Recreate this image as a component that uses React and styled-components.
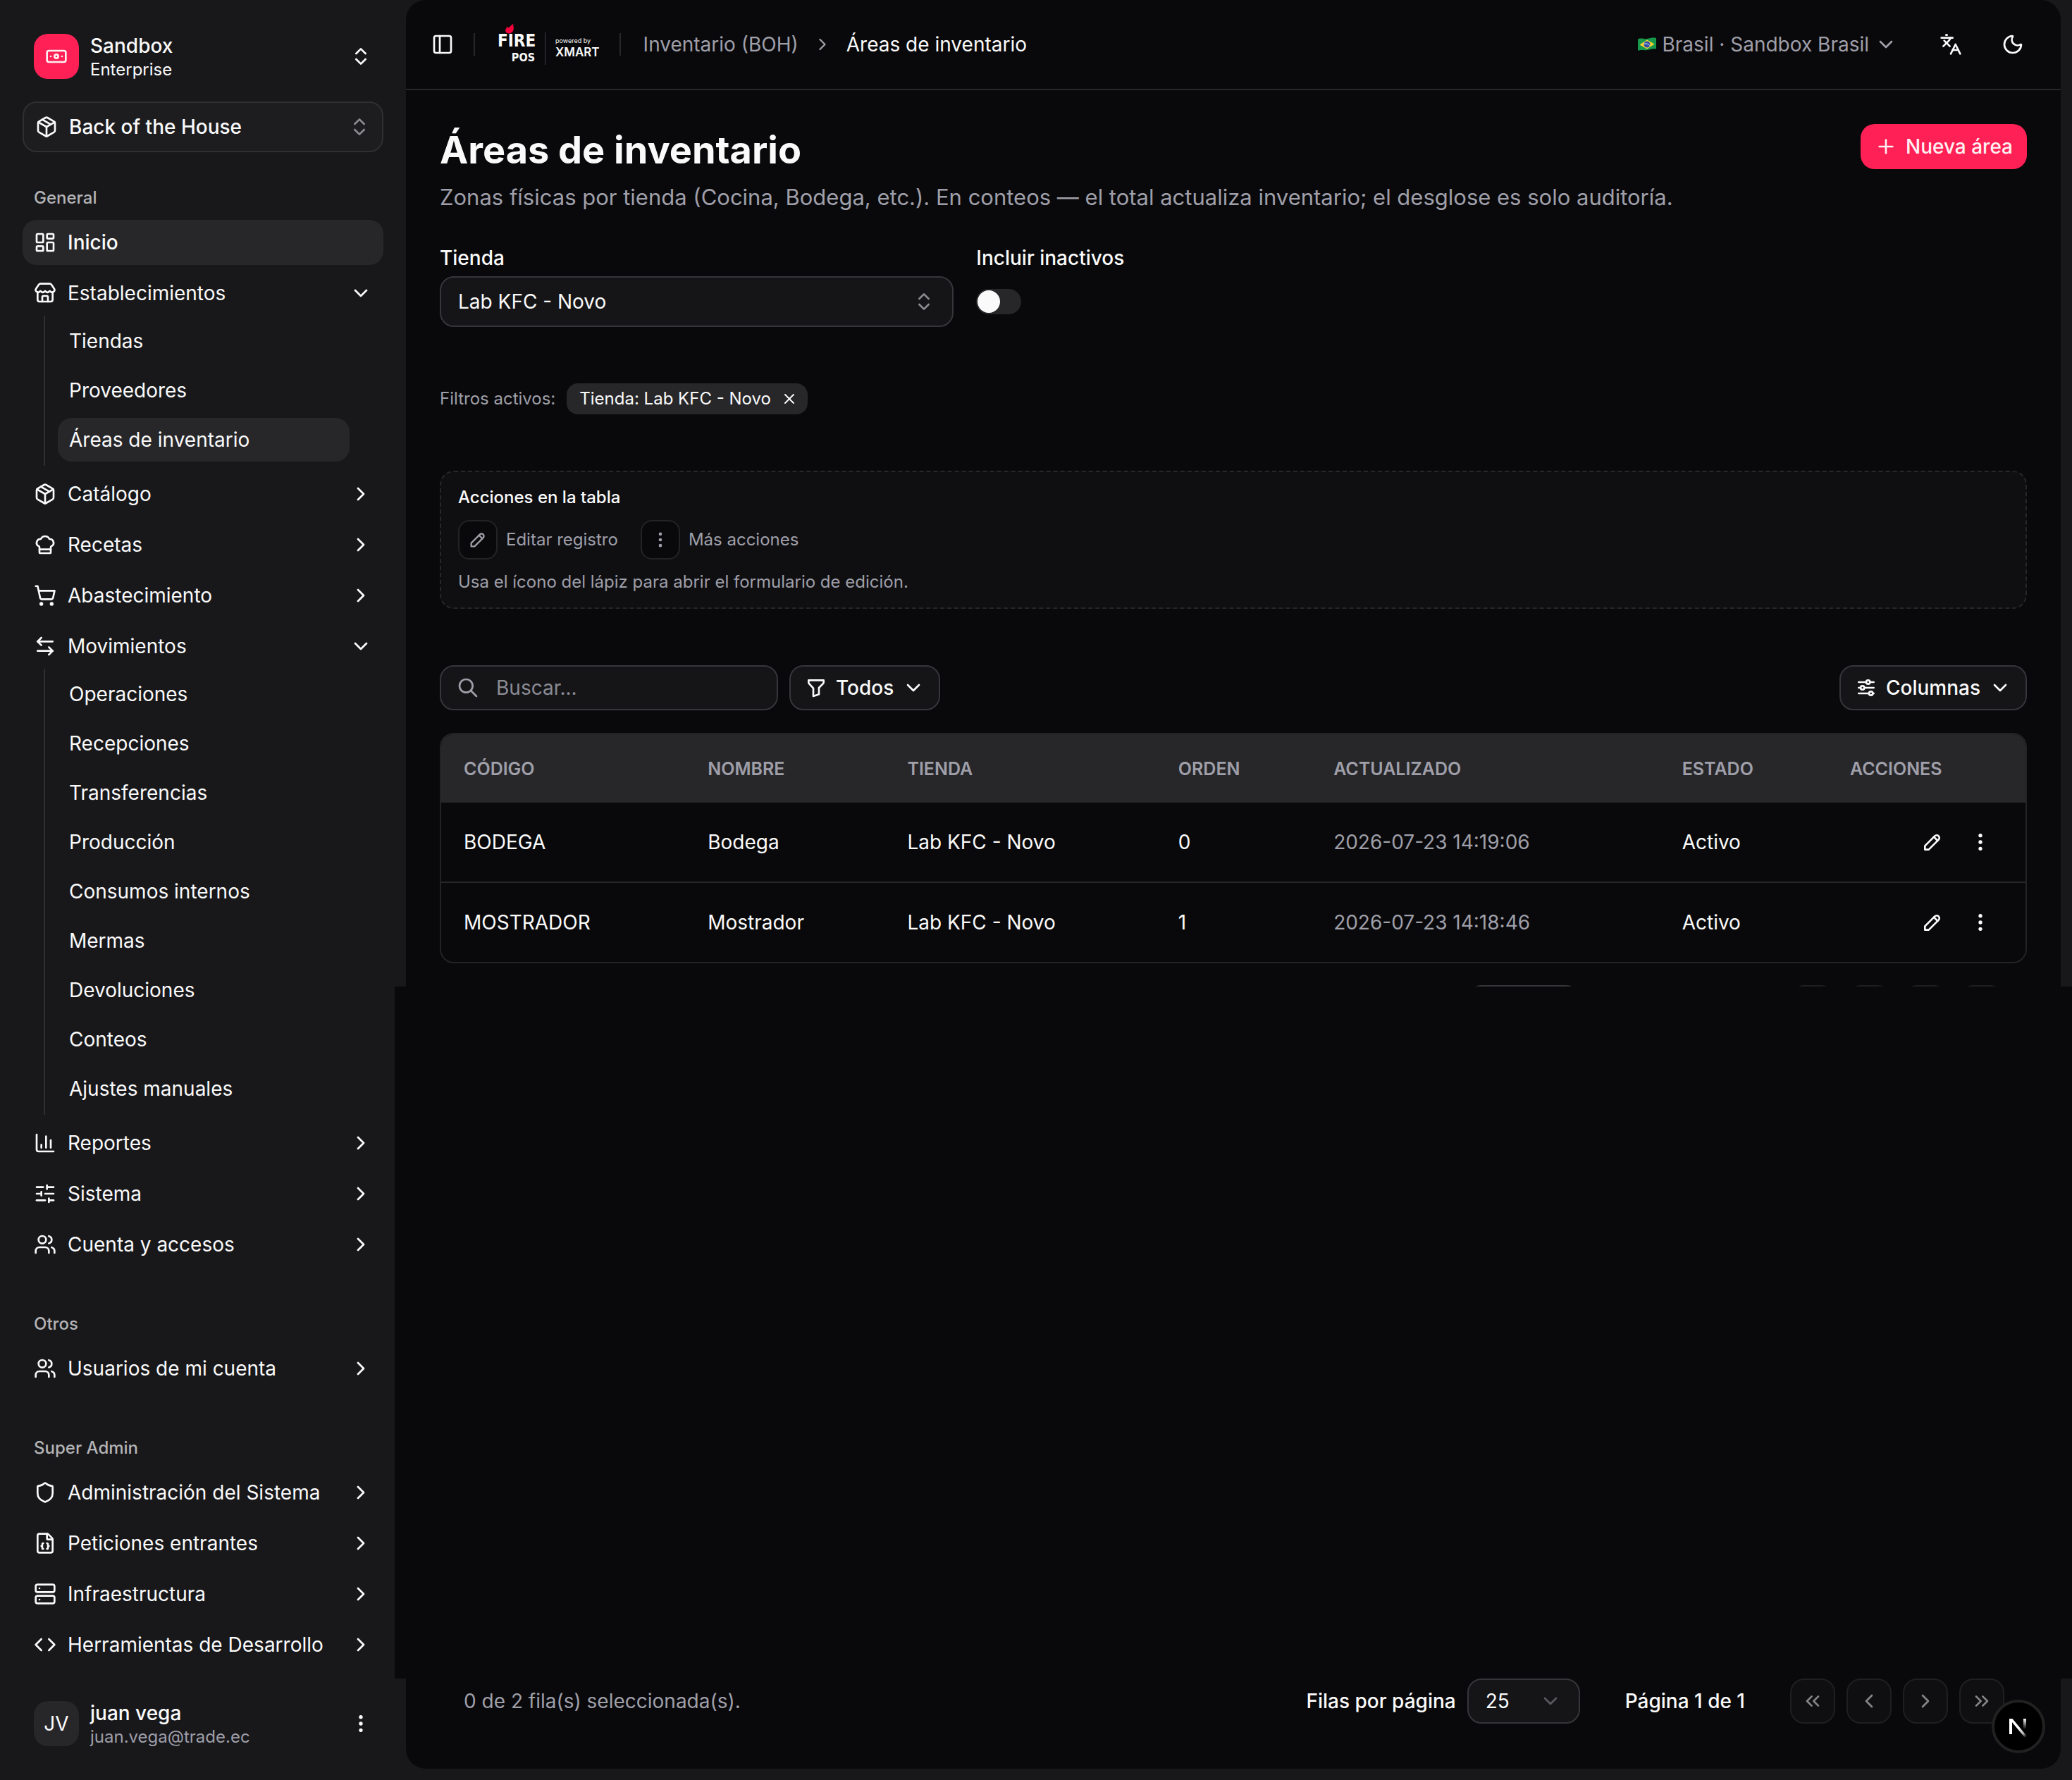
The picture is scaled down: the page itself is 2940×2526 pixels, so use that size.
import React from 'react'
import styled, { createGlobalStyle } from 'styled-components'
import {
  ArrowLeftRight, Banknote, ChartColumn, ChefHat, ChevronDown, ChevronLeft, ChevronRight,
  ChevronsLeft, ChevronsRight, ChevronsUpDown, Code, EllipsisVertical, FileBraces, Languages,
  LayoutDashboard, Moon, Package, PanelLeft, Plus, Server, Shield, ShoppingCart,
  SlidersHorizontal, Store, Users, X,
} from 'lucide-react'

const sections = [
  {
    title: 'General',
    items: [
      { label: 'Inicio', icon: LayoutDashboard, active: true },
      {
        label: 'Establecimientos',
        icon: Store,
        children: ['Tiendas', 'Proveedores', 'Áreas de inventario'],
      },
      { label: 'Catálogo', icon: Package },
      { label: 'Recetas', icon: ChefHat },
      { label: 'Abastecimiento', icon: ShoppingCart },
      {
        label: 'Movimientos',
        icon: ArrowLeftRight,
        children: [
          'Operaciones', 'Recepciones', 'Transferencias', 'Producción', 'Consumos internos',
          'Mermas', 'Devoluciones', 'Conteos', 'Ajustes manuales',
        ],
      },
      { label: 'Reportes', icon: ChartColumn },
      { label: 'Sistema', icon: SlidersHorizontal },
      { label: 'Cuenta y accesos', icon: Users },
    ],
  },
  { title: 'Otros', items: [{ label: 'Usuarios de mi cuenta', icon: Users }] },
  {
    title: 'Super Admin',
    items: [
      { label: 'Administración del Sistema', icon: Shield },
      { label: 'Peticiones entrantes', icon: FileBraces },
      { label: 'Infraestructura', icon: Server },
      { label: 'Herramientas de Desarrollo', icon: Code },
    ],
  },
]

const rows = [
  { code: 'BODEGA', name: 'Bodega', store: 'Lab KFC - Novo', order: 0, updated: '2026-07-23 14:19:06', status: 'Activo' },
  { code: 'MOSTRADOR', name: 'Mostrador', store: 'Lab KFC - Novo', order: 1, updated: '2026-07-23 14:18:46', status: 'Activo' },
]

const currentPage = 'Áreas de inventario'

function App() {
  return (
    <>
      <GlobalStyle />
      <Shell>
        <Sidebar />
        <Column>
          <Panel>
            <TopBar />
            <Content>
              <Heading />
              <Filters />
              <Legend />
              <Toolbar />
              <AreasTable />
            </Content>
            <PagerEdge aria-hidden="true">
              <EdgeSelect />
              <EdgeButtons><i /><i /><i /><i /></EdgeButtons>
            </PagerEdge>
          </Panel>
          <Band />
          <Bottom>
            <Pager />
          </Bottom>
        </Column>
        <DevBadge type="button" aria-label="Next.js">
          <NextMark />
        </DevBadge>
      </Shell>
    </>
  )
}

export default App

function Sidebar() {
  return (
    <Aside>
      <Team type="button">
        <TeamLogo><Banknote size={32} /></TeamLogo>
        <Identity>
          <strong>Sandbox</strong>
          <span>Enterprise</span>
        </Identity>
        <ChevronsUpDown size={32} />
      </Team>
      <ModuleSelect type="button">
        <Package size={32} />
        <span>Back of the House</span>
        <Dim size={32} />
      </ModuleSelect>
      <Nav>
        {sections.map((section) => (
          <section key={section.title}>
            <GroupLabel>{section.title}</GroupLabel>
            <Menu>
              {section.items.map((item) => (
                <MenuItem key={item.label} item={item} />
              ))}
            </Menu>
          </section>
        ))}
      </Nav>
      <User type="button">
        <Avatar>JV</Avatar>
        <Identity $muted>
          <strong>juan vega</strong>
          <span>juan.vega@trade.ec</span>
        </Identity>
        <EllipsisVertical size={32} />
      </User>
    </Aside>
  )
}

function MenuItem({ item }) {
  const Icon = item.icon
  if (item.active) {
    return (
      <li>
        <MenuLink href="#inicio" $active>
          <Icon size={32} />
          <span>{item.label}</span>
        </MenuLink>
      </li>
    )
  }
  return (
    <li>
      <MenuLink as="button" type="button" aria-expanded={Boolean(item.children)}>
        <Icon size={32} />
        <span>{item.label}</span>
        {item.children ? <ChevronDown size={32} /> : <ChevronRight size={32} />}
      </MenuLink>
      {item.children && (
        <SubMenu>
          {item.children.map((child) => (
            <li key={child}>
              <SubLink href="#" $active={child === currentPage}>{child}</SubLink>
            </li>
          ))}
        </SubMenu>
      )}
    </li>
  )
}

function TopBar() {
  return (
    <Header>
      <IconButton type="button" aria-label="Alternar menú"><PanelLeft size={32} /></IconButton>
      <Divider />
      <Brand href="#">
        <FireLogo />
        <BrandLine />
        <Powered>
          <small>powered by</small>
          <b>XMART</b>
        </Powered>
      </Brand>
      <Divider />
      <Crumbs aria-label="Ruta">
        <a href="#boh">Inventario (BOH)</a>
        <ChevronRight size={28} />
        <span>{currentPage}</span>
      </Crumbs>
      <HeaderRight>
        <Country type="button">
          <BrazilFlag />
          Brasil · Sandbox Brasil
          <ChevronDown size={32} />
        </Country>
        <IconButton type="button" aria-label="Idioma"><Languages size={32} /></IconButton>
        <IconButton type="button" aria-label="Tema"><Moon size={32} /></IconButton>
      </HeaderRight>
    </Header>
  )
}

function Heading() {
  return (
    <HeadingRow>
      <div>
        <Title>Áreas de inventario</Title>
        <Subtitle>
          Zonas físicas por tienda (Cocina, Bodega, etc.). En conteos — el total actualiza inventario; el desglose es solo auditoría.
        </Subtitle>
      </div>
      <Primary type="button">
        <Plus size={32} />
        Nueva área
      </Primary>
    </HeadingRow>
  )
}

function Filters() {
  return (
    <>
      <FilterGrid>
        <Field>
          <label htmlFor="store">Tienda</label>
          <SelectWrap>
            <StoreSelect id="store" defaultValue="novo">
              <option value="novo">Lab KFC - Novo</option>
            </StoreSelect>
            <Dim size={32} />
          </SelectWrap>
        </Field>
        <Field>
          <label htmlFor="inactive">Incluir inactivos</label>
          <SwitchBox>
            <Switch id="inactive" type="checkbox" role="switch" />
          </SwitchBox>
        </Field>
      </FilterGrid>
      <ActiveFilters>
        <span>Filtros activos:</span>
        <Chip>
          Tienda: Lab KFC - Novo
          <ChipClose type="button" aria-label="Quitar filtro"><X size={24} /></ChipClose>
        </Chip>
      </ActiveFilters>
    </>
  )
}

function Legend() {
  return (
    <LegendBox>
      <h2>Acciones en la tabla</h2>
      <LegendList>
        <li><LegendIcon><PencilIcon size={28} /></LegendIcon>Editar registro</li>
        <li><LegendIcon><EllipsisVertical size={28} /></LegendIcon>Más acciones</li>
      </LegendList>
      <p>Usa el ícono del lápiz para abrir el formulario de edición.</p>
    </LegendBox>
  )
}

function Toolbar() {
  return (
    <Tools>
      <SearchBox>
        <SearchIcon />
        <input type="search" placeholder="Buscar..." aria-label="Buscar" />
      </SearchBox>
      <Outline type="button">
        <FilterIcon />
        Todos
        <ChevronDown size={32} />
      </Outline>
      <Outline type="button" $end>
        <AdjustmentsIcon />
        Columnas
        <ChevronDown size={32} />
      </Outline>
    </Tools>
  )
}

function AreasTable() {
  return (
    <TableFrame>
      <Table>
        <thead>
          <tr>
            <Th $width="15.4%">Código</Th>
            <Th $width="12.6%">Nombre</Th>
            <Th $width="17.1%">Tienda</Th>
            <Th $width="9.8%">Orden</Th>
            <Th $width="22%">Actualizado</Th>
            <Th $width="10.6%">Estado</Th>
            <Th $width="12.5%">Acciones</Th>
          </tr>
        </thead>
        <tbody>
          {rows.map((row) => (
            <tr key={row.code}>
              <Td>{row.code}</Td>
              <Td>{row.name}</Td>
              <Td>{row.store}</Td>
              <Td>{row.order}</Td>
              <Td $muted>{row.updated}</Td>
              <Td>{row.status}</Td>
              <Td>
                <RowActions>
                  <IconButton type="button" aria-label={`Editar ${row.name}`}><PencilIcon size={32} /></IconButton>
                  <IconButton type="button" aria-label={`Más acciones de ${row.name}`}><EllipsisVertical size={32} /></IconButton>
                </RowActions>
              </Td>
            </tr>
          ))}
        </tbody>
      </Table>
    </TableFrame>
  )
}

function Pager() {
  return (
    <PagerRow>
      <Selected>0 de 2 fila(s) seleccionada(s).</Selected>
      <PageSize>
        <label htmlFor="size">Filas por página</label>
        <SizeWrap>
          <SizeSelect id="size" defaultValue="25">
            <option>25</option>
          </SizeSelect>
          <ChevronDown size={32} />
        </SizeWrap>
      </PageSize>
      <PageCount>Página 1 de 1</PageCount>
      <PageButtons>
        <button type="button" disabled aria-label="Primera página"><ChevronsLeft size={32} /></button>
        <button type="button" disabled aria-label="Página anterior"><ChevronLeft size={32} /></button>
        <button type="button" disabled aria-label="Página siguiente"><ChevronRight size={32} /></button>
        <button type="button" disabled aria-label="Última página"><ChevronsRight size={32} /></button>
      </PageButtons>
    </PagerRow>
  )
}

function Stroke({ size = 32, children }) {
  return (
    <svg width={size} height={size} viewBox="0 0 24 24" fill="none" stroke="currentColor" strokeWidth="2" strokeLinecap="round" strokeLinejoin="round">
      {children}
    </svg>
  )
}

function PencilIcon({ size }) {
  return (
    <Stroke size={size}>
      <path d="M4 20h4L18.500 9.500a2.828 2.828 0 1 0-4-4L4 16v4" />
      <path d="M13.500 6.500l4 4" />
    </Stroke>
  )
}

function SearchIcon() {
  return (
    <Stroke>
      <circle cx="10" cy="10" r="7" />
      <path d="M21 21l-6-6" />
    </Stroke>
  )
}

function FilterIcon() {
  return (
    <Stroke>
      <path d="M4 4h16v2.172a2 2 0 0 1-.586 1.414L15 12v7l-6 2v-8.500L4.520 7.572A2 2 0 0 1 4 6.227z" />
    </Stroke>
  )
}

function AdjustmentsIcon() {
  return (
    <Stroke>
      <circle cx="14" cy="6" r="2" />
      <circle cx="8" cy="12" r="2" />
      <circle cx="17" cy="18" r="2" />
      <path d="M4 6h8M16 6h4M4 12h2M10 12h10M4 18h11M19 18h1" />
    </Stroke>
  )
}

function FireLogo() {
  return (
    <Fire>
      <svg width="12" height="14" viewBox="0 0 12 14">
        <path d="M11.500 0C11 2 11.500 3 11.800 5c.4 4-1.600 7.500-5.600 8.500C2.500 14 0 12 .2 9 .4 6.500 2 6 3 3.500c.8.5 1 1.300 1 2.300C7 4.500 7.500 1.500 11.500 0Z" fill="#f5003c" />
      </svg>
      <b>FIRE</b>
      <i>POS</i>
    </Fire>
  )
}

function BrazilFlag() {
  return (
    <svg width="26" height="20" viewBox="0 0 26 20">
      <path d="M0 2.500C5 0 8 3 13 2S21 0 26 1v15.500c-5-1-8 .5-13 1.500S5 17 0 19Z" fill="#17994b" />
      <path d="M13 3.500 23.500 9.500 13 16.500 2.500 10.500Z" fill="#fbd034" />
      <circle cx="13" cy="10" r="4.500" fill="#3150a5" />
      <path d="M8.800 9c3-.6 6 .4 8.300 2.600" stroke="#dfe6f4" fill="none" />
    </svg>
  )
}

function NextMark() {
  return (
    <svg width="36" height="36" viewBox="0 0 36 36" fill="none" strokeWidth="4">
      <defs>
        <linearGradient id="fadeDiagonal" x1="19" y1="20" x2="29" y2="33" gradientUnits="userSpaceOnUse">
          <stop stopColor="#fff" />
          <stop offset="0.6" stopColor="#fff" stopOpacity="0.7" />
          <stop offset="1" stopColor="#fff" stopOpacity="0" />
        </linearGradient>
        <linearGradient id="fadeStem" x1="27" y1="7" x2="27" y2="22" gradientUnits="userSpaceOnUse">
          <stop stopColor="#fff" />
          <stop offset="1" stopColor="#fff" stopOpacity="0" />
        </linearGradient>
      </defs>
      <path d="M5 7h4.500L31 33l-3 2L9 12v17H5Z" fill="url(#fadeDiagonal)" />
      <path d="M27 7v15" stroke="url(#fadeStem)" />
    </svg>
  )
}

const GlobalStyle = createGlobalStyle`
  * {
    box-sizing: border-box;
  }
  body {
    margin: 0;
    background: #18181b;
    color: #fafafa;
    font-family: Inter, 'Liberation Sans', sans-serif;
    font-size: 28px;
    line-height: 40px;
  }
  button, input, select {
    font: inherit;
    color: inherit;
  }
  button {
    border: 0;
    padding: 0;
    background: none;
    text-align: left;
  }
  a {
    color: inherit;
    text-decoration: none;
  }
  ul {
    list-style: none;
    margin: 0;
    padding: 0;
  }
  h1, h2, p {
    margin: 0;
  }
  svg {
    flex: none;
    display: block;
  }
`
const Shell = styled.div`
  display: flex;
  min-height: 100vh;
`
const Aside = styled.aside`
  flex: none;
  width: 576px;
  padding: 32px;
  display: flex;
  flex-direction: column;
`
const Team = styled.button`
  display: flex;
  align-items: center;
  gap: 16px;
  height: 96px;
  padding: 0 16px;
`
const TeamLogo = styled.span`
  display: flex;
  align-items: center;
  justify-content: center;
  width: 64px;
  height: 64px;
  border-radius: 20px;
  background: #ff2056;
  color: #fff1f2;
`
const Identity = styled.span`
  flex: 1;
  display: flex;
  flex-direction: column;
  padding-top: 2px;
  strong {
    font-weight: 500;
    line-height: 35px;
  }
  span {
    font-size: 24px;
    line-height: 32px;
    color: ${(p) => (p.$muted ? '#9f9fa9' : 'inherit')};
  }
`
const ModuleSelect = styled.button`
  display: flex;
  align-items: center;
  gap: 16px;
  height: 72px;
  margin-top: 16px;
  padding: 0 16px;
  border: 2px solid #2f2f32;
  border-radius: 20px;
  background: #1d1d20;
  font-weight: 500;
  span {
    flex: 1;
  }
`
const Dim = styled(ChevronsUpDown)`
  color: #8b8b8f;
`
const Nav = styled.nav`
  display: flex;
  flex-direction: column;
  gap: 48px;
  margin-top: 32px;
`
const GroupLabel = styled.div`
  height: 64px;
  padding: 0 16px;
  font-size: 24px;
  font-weight: 500;
  line-height: 66px;
  color: #b4b4b6;
`
const Menu = styled.ul`
  display: flex;
  flex-direction: column;
  gap: 8px;
`
const MenuLink = styled.a`
  display: flex;
  align-items: center;
  gap: 16px;
  width: 100%;
  height: 64px;
  padding: 0 16px;
  border-radius: 20px;
  background: ${(p) => (p.$active ? '#27272a' : 'transparent')};
  font-weight: ${(p) => (p.$active ? 500 : 400)};
  span {
    flex: 1;
  }
`
const SubMenu = styled.ul`
  display: flex;
  flex-direction: column;
  gap: 8px;
  margin: 0 30px;
  padding: 5px 18px 6px;
  border-left: 2px solid #2f2f32;
`
const SubLink = styled.a`
  display: block;
  padding: 11px 16px;
  border-radius: 20px;
  background: ${(p) => (p.$active ? '#27272a' : 'transparent')};
`
const User = styled(Team)`
  margin-top: auto;
`
const Avatar = styled.span`
  width: 64px;
  border-radius: 20px;
  background: #27272a;
  line-height: 64px;
  text-align: center;
`
const Column = styled.div`
  flex: 1;
  min-width: 0;
  display: flex;
  flex-direction: column;
  padding: 0 16px 16px 0;
`
const Panel = styled.main`
  border-radius: 28px 28px 0 0;
  background: #09090b;
`
const Header = styled.header`
  display: flex;
  align-items: center;
  height: 128px;
  padding: 0 36px;
  border-bottom: 2px solid #27272a;
`
const IconButton = styled.button`
  display: flex;
`
const Divider = styled.span`
  width: 2px;
  height: 32px;
  margin: 0 32px 0 28px;
  background: #27272a;
`
const Brand = styled.a`
  display: flex;
  align-items: center;
  gap: 14px;
`
const Fire = styled.span`
  display: flex;
  flex-direction: column;
  width: 53px;
  font-family: 'DejaVu Sans Condensed', 'DejaVu Sans', sans-serif;
  font-weight: 700;
  svg {
    margin: 0 0 -4px 11px;
  }
  b {
    font-size: 24px;
    line-height: 28px;
  }
  i {
    align-self: flex-end;
    font-size: 16px;
    font-style: normal;
    line-height: 20px;
  }
`
const BrandLine = styled.span`
  width: 1px;
  height: 46px;
  margin-top: 12px;
  background: #3f3f46;
`
const Powered = styled.span`
  display: flex;
  flex-direction: column;
  padding-top: 10px;
  small {
    font-size: 9px;
    line-height: 13px;
  }
  b {
    font-size: 17px;
    line-height: 21px;
    font-weight: 600;
  }
`
const Crumbs = styled.nav`
  display: flex;
  align-items: center;
  gap: 20px;
  color: #9f9fa9;
  span {
    color: #fafafa;
  }
`
const HeaderRight = styled.div`
  display: flex;
  align-items: center;
  gap: 56px;
  margin-left: auto;
  padding-right: 16px;
`
const Country = styled.button`
  display: flex;
  align-items: center;
  gap: 8px;
  margin-right: 4px;
  color: #9f9fa9;
`
const Content = styled.div`
  display: flex;
  flex-direction: column;
  padding: 48px 48px 31px;
`
const HeadingRow = styled.div`
  display: flex;
  align-items: flex-start;
  justify-content: space-between;
`
const Title = styled.h1`
  font-size: 54px;
  font-weight: 700;
  line-height: 74px;
`
const Subtitle = styled.p`
  margin-top: 6px;
  font-size: 31px;
  line-height: 48px;
  color: #9f9fa9;
`
const Primary = styled.button`
  display: flex;
  align-items: center;
  gap: 12px;
  height: 64px;
  padding: 0 20px;
  border-radius: 20px;
  background: #ff2056;
  color: #fff1f2;
  font-weight: 500;
`
const FilterGrid = styled.div`
  display: grid;
  grid-template-columns: repeat(3, 1fr);
  gap: 32px;
  margin-top: 48px;
`
const Field = styled.div`
  label {
    display: block;
    font-weight: 500;
    line-height: 28px;
  }
`
const SelectWrap = styled.div`
  display: grid;
  align-items: center;
  margin-top: 12px;
  > * {
    grid-area: 1 / 1;
  }
  svg {
    justify-self: end;
    margin-right: 26px;
    pointer-events: none;
  }
`
const StoreSelect = styled.select`
  appearance: none;
  width: 100%;
  height: 72px;
  padding: 0 24px;
  border: 2px solid #36363a;
  border-radius: 20px;
  background: #151518;
`
const SwitchBox = styled.div`
  display: flex;
  align-items: center;
  height: 72px;
  margin-top: 12px;
`
const Switch = styled.input`
  appearance: none;
  width: 64px;
  height: 36px;
  margin: 0;
  padding: 2px;
  border-radius: 18px;
  background: #27272a;
  &::before {
    content: '';
    display: block;
    width: 32px;
    height: 32px;
    border-radius: 50%;
    background: #fafafa;
  }
  &:checked::before {
    margin-left: auto;
  }
`
const ActiveFilters = styled.div`
  display: flex;
  align-items: center;
  gap: 16px;
  margin-top: 80px;
  font-size: 24px;
  line-height: 32px;
  color: #9f9fa9;
`
const Chip = styled.span`
  display: flex;
  align-items: center;
  gap: 14px;
  height: 44px;
  padding: 0 14px 0 18px;
  border-radius: 16px;
  background: #27272a;
  color: #fafafa;
`
const ChipClose = styled.button`
  display: flex;
`
const LegendBox = styled.section`
  margin-top: 80px;
  padding: 20px 24px;
  border: 2px dashed #27272a;
  border-radius: 20px;
  background: #0f0f12;
  font-size: 24px;
  line-height: 32px;
  color: #9f9fa9;
  h2 {
    font-size: 24px;
    font-weight: 500;
    color: #fafafa;
  }
`
const LegendList = styled.ul`
  display: flex;
  gap: 32px;
  margin: 16px 0;
  li {
    display: flex;
    align-items: center;
    gap: 12px;
  }
`
const LegendIcon = styled.span`
  display: flex;
  align-items: center;
  justify-content: center;
  width: 56px;
  height: 56px;
  border: 2px solid #232326;
  border-radius: 16px;
  background: #09090b;
`
const Tools = styled.div`
  display: flex;
  gap: 16px;
  margin-top: 80px;
`
const SearchBox = styled.label`
  display: flex;
  align-items: center;
  gap: 24px;
  width: 480px;
  height: 64px;
  padding: 0 22px;
  border: 2px solid #36363a;
  border-radius: 20px;
  background: #151518;
  color: #9f9fa9;
  input {
    flex: 1;
    min-width: 0;
    padding: 0;
    border: 0;
    outline: 0;
    background: none;
  }
  input::placeholder {
    color: #8b8b93;
  }
`
const Outline = styled.button`
  display: flex;
  align-items: center;
  gap: 12px;
  height: 64px;
  padding: 0 20px;
  margin-left: ${(p) => (p.$end ? 'auto' : 0)};
  border: 2px solid #36363a;
  border-radius: 20px;
  background: #151518;
  font-weight: 500;
`
const TableFrame = styled.div`
  margin-top: 32px;
  border: 2px solid #232326;
  border-radius: 20px;
  overflow: hidden;
`
const Table = styled.table`
  width: 100%;
  table-layout: fixed;
  border-collapse: collapse;
  tr + tr {
    border-top: 2px solid #27272a;
  }
`
const Th = styled.th`
  width: ${(p) => p.$width};
  height: 97px;
  padding: 0 32px;
  background: #27272a;
  color: #9f9fa9;
  font-size: 25px;
  font-weight: 600;
  text-align: left;
  text-transform: uppercase;
`
const Td = styled.td`
  height: 113px;
  padding: 0 32px;
  color: ${(p) => (p.$muted ? '#9f9fa9' : '#fafafa')};
`
const RowActions = styled.div`
  display: flex;
  justify-content: flex-end;
  gap: 36px;
  padding-right: 16px;
`
/* cut-off top edge of the pager, just above the dark band */
const PagerEdge = styled.div`
  display: flex;
  justify-content: flex-end;
  gap: 298px;
  height: 2px;
  padding: 0 80px;
  overflow: hidden;
`
const EdgeSelect = styled.span`
  width: 160px;
  height: 64px;
  border: 2px solid #36363a;
  border-radius: 20px;
`
const EdgeButtons = styled.span`
  display: flex;
  gap: 16px;
  i {
    width: 64px;
    height: 64px;
    border: 2px solid #1f1f22;
    border-radius: 20px;
  }
`
const Band = styled.div`
  flex: 1;
  margin: 0 -16px;
  background: #09090b;
`
const Bottom = styled.footer`
  padding: 0 80px 64px;
  border-radius: 0 0 28px 28px;
  background: #09090b;
`
const PagerRow = styled.div`
  display: flex;
  align-items: center;
  padding-left: 2px;
  font-weight: 500;
`
const Selected = styled.span`
  flex: 1;
  font-weight: 400;
  color: #9f9fa9;
`
const PageSize = styled.div`
  display: flex;
  align-items: center;
  gap: 16px;
`
const SizeWrap = styled(SelectWrap)`
  width: 160px;
  margin-top: 0;
  svg {
    color: #5a5a5e;
  }
`
const SizeSelect = styled(StoreSelect)`
  height: 64px;
  font-weight: 400;
`
const PageCount = styled.span`
  margin: 0 64px;
`
const PageButtons = styled.div`
  display: flex;
  gap: 16px;
  button {
    display: flex;
    align-items: center;
    justify-content: center;
    width: 64px;
    height: 64px;
    border: 2px solid #1f1f22;
    border-radius: 20px;
    background: #0f0f12;
    color: #858587;
  }
`
const DevBadge = styled.button`
  position: fixed;
  right: 38px;
  bottom: 38px;
  display: flex;
  align-items: center;
  justify-content: center;
  width: 76px;
  height: 76px;
  border: 4px solid #212121;
  border-radius: 50%;
  background: #000;
`
